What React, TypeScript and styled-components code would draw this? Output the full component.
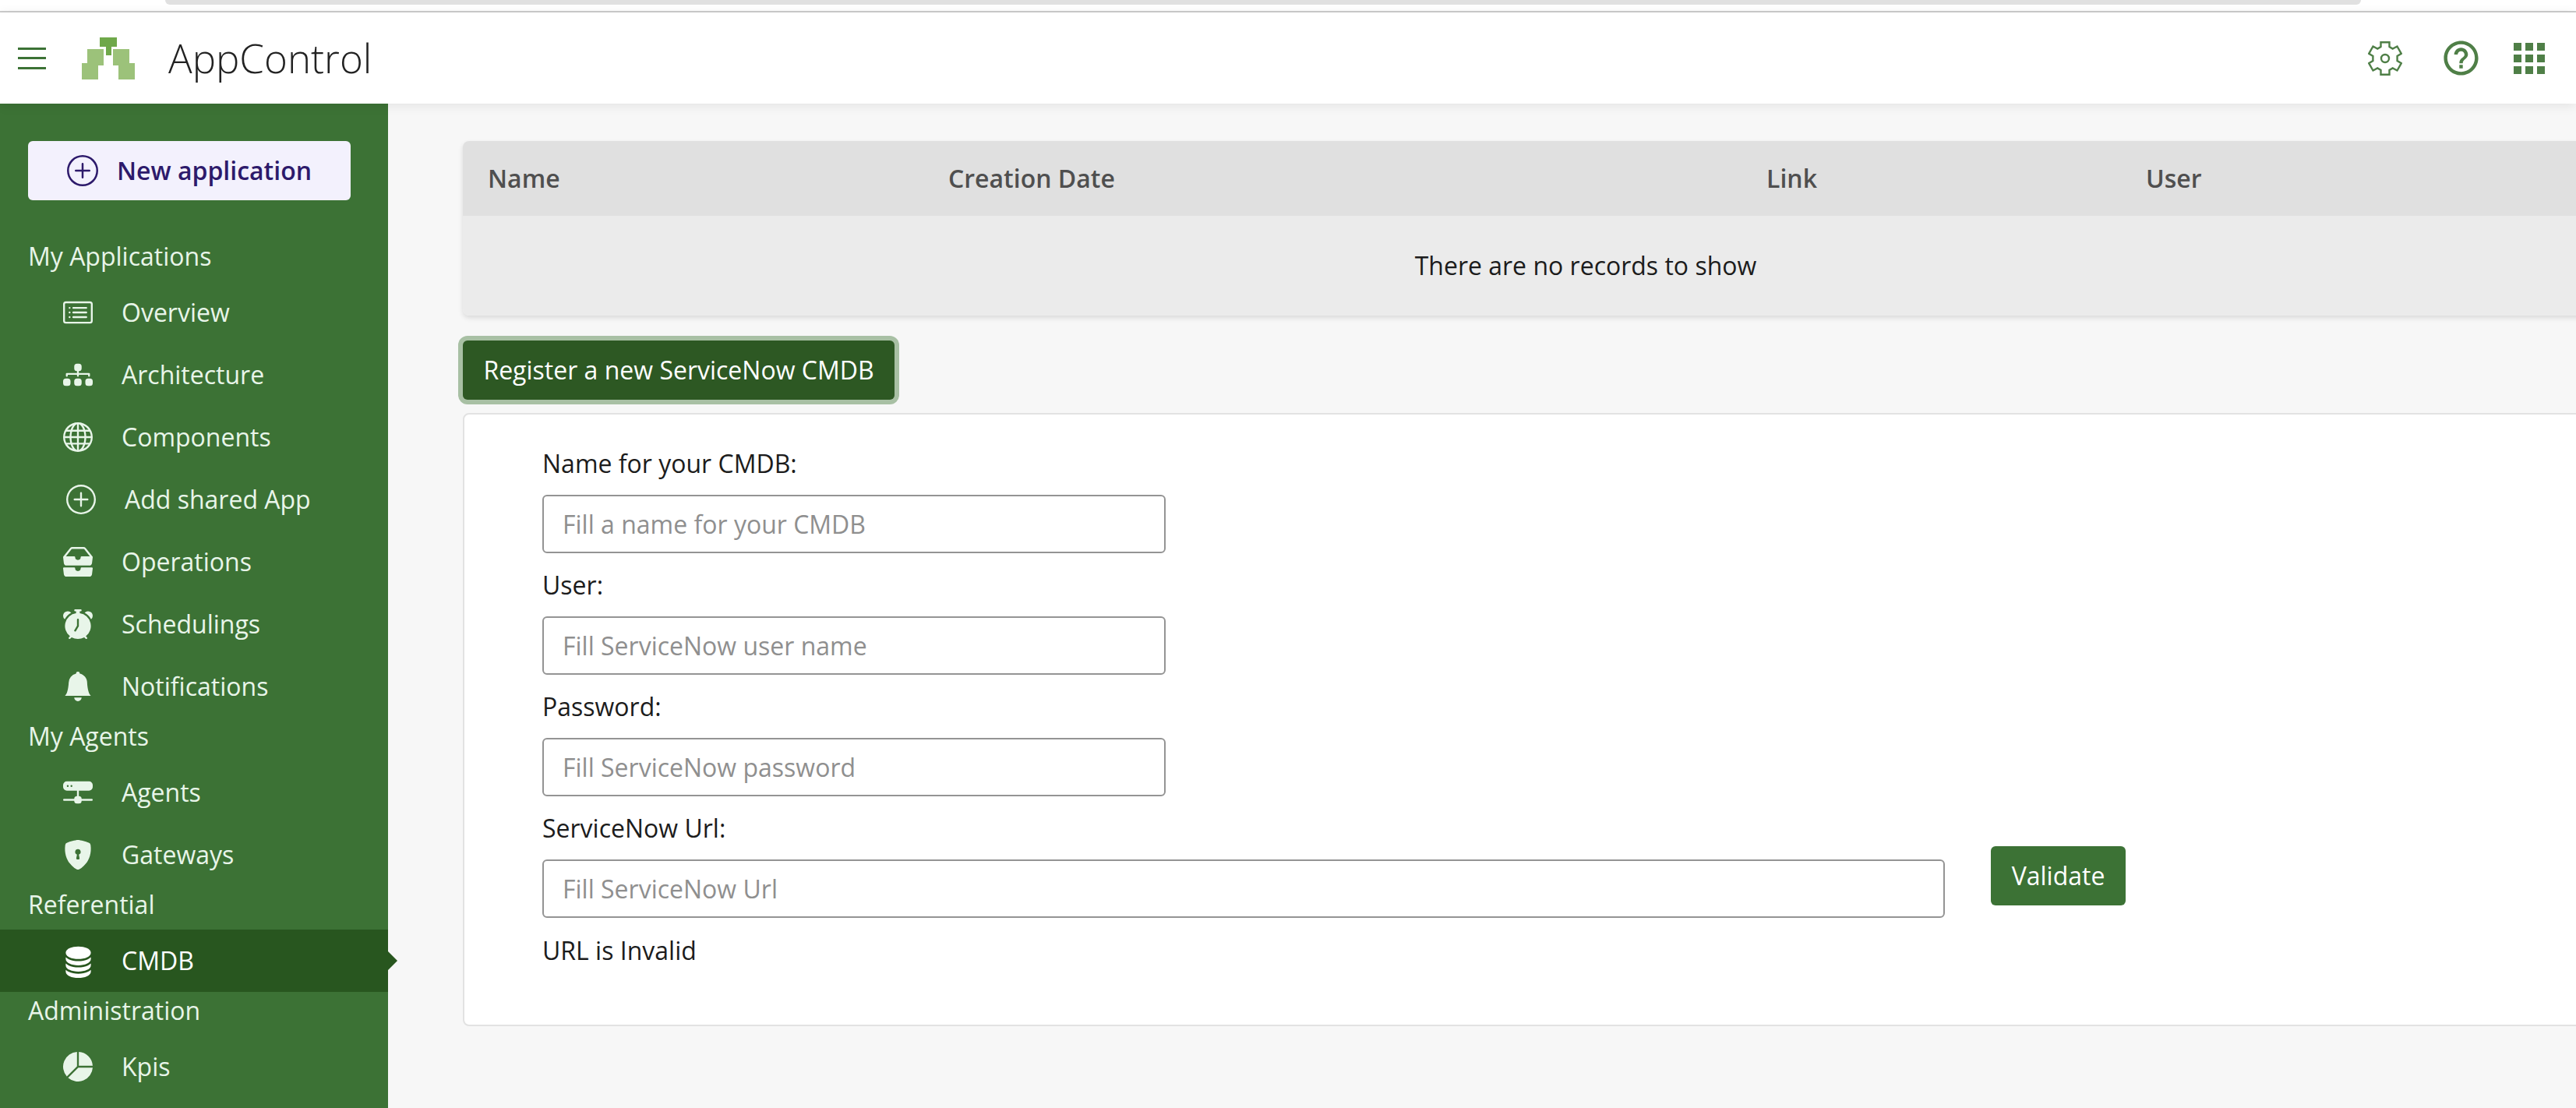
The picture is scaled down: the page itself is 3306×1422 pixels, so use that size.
import React, { ComponentType, FC } from 'react'
import styled, { createGlobalStyle } from 'styled-components'
import {
  BsAlarmFill,
  BsBellFill,
  BsCardList,
  BsDatabaseFill,
  BsDiagram3Fill,
  BsGlobe,
  BsHddNetworkFill,
  BsInboxesFill,
  BsPieChartFill,
  BsPlusCircle,
  BsShieldLockFill,
} from 'react-icons/bs'
import { MdHelpOutline } from 'react-icons/md'

const GlobalStyle = createGlobalStyle`
  html, body {
    margin: 0;
    height: 100%;
    overflow: hidden;
    background: #f7f7f7;
    font-family: "Open Sans", "Liberation Sans", sans-serif;
    font-size: 32px;
    line-height: 48px;
    color: #1c1c1c;
  }
  * { box-sizing: border-box; }
`

const Page = styled.div`
  width: 3306px;
  height: 1422px;
  display: flex;
  flex-direction: column;
  overflow: hidden;
`

const BrowserStrip = styled.div`
  height: 16px;
  flex: none;
  background: #fff;
  border-bottom: 2px solid #cdcdcd;
  padding: 0 276px 0 212px;
`

const BrowserPill = styled.div`
  height: 6px;
  background: #e0e0e0;
  border-radius: 0 0 20px 20px;
`

const Header = styled.header`
  height: 117px;
  flex: none;
  display: flex;
  align-items: center;
  background: #fff;
  padding: 0 40px 0 23px;
  position: relative;
  z-index: 2;
  box-shadow: 0 2px 14px rgba(0, 0, 0, 0.09);
`

const Burger = styled.div`
  width: 36px;
  height: 28px;
  display: flex;
  flex-direction: column;
  justify-content: space-between;
  margin-right: 46px;

  span {
    height: 3px;
    background: #3c7235;
  }
`

const AppTitle = styled.div`
  font-size: 51px;
  font-weight: 300;
  color: #222;
  margin-left: 43px;
  line-height: 60px;
  margin-top: -2px;
`

const HeaderActions = styled.div`
  margin-left: auto;
  display: flex;
  align-items: center;
  color: #4f7f47;
`

const HeaderIcon = styled.div<{ $gap: number }>`
  margin-right: ${(p) => p.$gap}px;
  display: flex;
  align-items: center;
  justify-content: center;
  width: 44px;
  height: 44px;

  svg {
    flex: none;
  }
`

const Body = styled.div`
  flex: 1;
  display: flex;
  min-height: 0;
`

const Sidebar = styled.nav`
  width: 498px;
  flex: none;
  background: #3c7235;
  padding-top: 48px;
  color: #e8f5e9;
`

const NewAppButton = styled.button`
  width: 414px;
  height: 76px;
  margin: 0 0 48px 36px;
  padding: 0 0 0 50px;
  display: flex;
  align-items: center;
  gap: 24px;
  border: none;
  border-radius: 6px;
  background: #f3f1fd;
  color: #2d1a6b;
  font: 600 32px/48px "Open Sans", sans-serif;
`

const SectionLabel = styled.div`
  height: 48px;
  line-height: 48px;
  padding-left: 36px;
  margin-bottom: 8px;
`

const NavItem = styled.div<{ $active?: boolean; $shift?: boolean }>`
  position: relative;
  height: 80px;
  display: flex;
  align-items: center;
  gap: 37px;
  padding-left: ${(p) => (p.$shift ? 85 : 81)}px;
  background: ${(p) => (p.$active ? '#28561f' : 'transparent')};
  color: ${(p) => (p.$active ? '#fff' : 'inherit')};

  ${(p) =>
    p.$active &&
    `&::after {
      content: '';
      position: absolute;
      left: 100%;
      top: 50%;
      margin-top: -12px;
      border-left: 12px solid #28561f;
      border-top: 12px solid transparent;
      border-bottom: 12px solid transparent;
    }`}
`

const IconSlot = styled.span`
  flex: none;
  width: 38px;
  height: 38px;
  display: flex;
  align-items: center;
  justify-content: center;

  svg {
    flex: none;
  }
`

const Main = styled.main`
  flex: 1;
  min-width: 0;
  padding: 48px 0 0 96px;
  background: #f7f7f7;
`

const Table = styled.div`
  width: 2882px;
  border-radius: 8px;
  overflow: hidden;
  box-shadow: 0 3px 6px rgba(0, 0, 0, 0.12);
`

const TableHead = styled.div`
  height: 96px;
  display: grid;
  grid-template-columns: 591px 1050px 487px 1fr;
  align-items: center;
  background: #e0e0e0;
  color: #4f4f4f;
  font-weight: 600;
`

const HeadCell = styled.div`
  padding-left: 32px;
`

const EmptyRow = styled.div`
  height: 128px;
  display: flex;
  align-items: center;
  justify-content: center;
  background: #ebebeb;
  color: #1c1c1c;
`

const RegisterButton = styled.button`
  display: block;
  width: 554px;
  height: 76px;
  margin: 32px 0 17px;
  padding: 0;
  border: none;
  border-radius: 6px;
  background: #2d5823;
  color: #fff;
  font: 400 32px/48px "Open Sans", sans-serif;
  box-shadow: 0 0 0 6px #a8c0a4;
`

const FormCard = styled.section`
  width: 2882px;
  height: 787px;
  padding: 39px 100px 0;
  background: #fff;
  border: 2px solid #e2e2e2;
  border-radius: 8px;
`

const Label = styled.label`
  display: block;
  height: 48px;
  margin-bottom: 16px;
`

const TextInput = styled.input<{ $wide?: boolean }>`
  display: block;
  width: ${(p) => (p.$wide ? 1800 : 800)}px;
  height: 75px;
  padding: 0 24px;
  border: 2px solid #949494;
  border-radius: 6px;
  background: #fff;
  font: 400 32px/48px "Open Sans", sans-serif;
  color: #1c1c1c;

  &::placeholder {
    color: #8f8f8f;
    opacity: 1;
  }
`

const Field = styled.div`
  margin-bottom: 17px;
`

const UrlRow = styled.div`
  display: flex;
  align-items: flex-start;
  gap: 59px;
`

const ValidateButton = styled.button`
  width: 173px;
  height: 76px;
  margin-top: -17px;
  padding: 0;
  border: none;
  border-radius: 6px;
  background: #3c7235;
  color: #fff;
  font: 400 32px/48px "Open Sans", sans-serif;
`

const ErrorText = styled.div`
  margin-top: 18px;
`

const Logo: FC = () => (
  <svg width="68" height="54" viewBox="0 0 68 54" style={{ flex: 'none' }}>
    <path d="M7 15h21v21h-7v-2H7z" fill="#9cc27a" />
    <path d="M40 15h21v19h-14v2h-7z" fill="#9cc27a" />
    <path d="M23 0h22v12h-7v11h-7V12h-8z" fill="#6fa84a" />
    <path d="M0 33h21v21H0z" fill="#9cc27a" />
    <path d="M47 33h21v21H47z" fill="#9cc27a" />
  </svg>
)

const GearIcon: FC = () => (
  <svg width="44" height="44" viewBox="0 0 44 44" fill="none" stroke="currentColor" strokeWidth="2.4">
    <path d="M16.5 1.2H27.5V7L31.7 9.6L37.5 6.5L42.8 15.8L37.6 19V25L42.8 28.2L37.5 37.5L31.7 34.4L27.5 37V42.8H16.5V37L12.3 34.4L6.5 37.5L1.2 28.2L6.4 25V19L1.2 15.8L6.5 6.5L12.3 9.6L16.5 7Z" />
    <circle cx="22" cy="22" r="5" />
  </svg>
)

const GridIcon: FC = () => {
  const cells = [0, 15, 30]
  return (
    <svg width="40" height="40" viewBox="0 0 40 40" fill="currentColor">
      {cells.map((y) => cells.map((x) => <rect key={`${x}-${y}`} x={x} y={y} width="10" height="10" />))}
    </svg>
  )
}

type NavEntry = {
  label: string
  icon: ComponentType<{ size?: number }>
  iconSize?: number
  active?: boolean
  shift?: boolean
}
type NavSection = { title: string; items: NavEntry[] }

const sections: NavSection[] = [
  {
    title: 'My Applications',
    items: [
      { label: 'Overview', icon: BsCardList },
      { label: 'Architecture', icon: BsDiagram3Fill },
      { label: 'Components', icon: BsGlobe },
      { label: 'Add shared App', icon: BsPlusCircle, shift: true },
      { label: 'Operations', icon: BsInboxesFill },
      { label: 'Schedulings', icon: BsAlarmFill },
      { label: 'Notifications', icon: BsBellFill },
    ],
  },
  {
    title: 'My Agents',
    items: [
      { label: 'Agents', icon: BsHddNetworkFill },
      { label: 'Gateways', icon: BsShieldLockFill },
    ],
  },
  {
    title: 'Referential',
    items: [{ label: 'CMDB', icon: BsDatabaseFill, iconSize: 43, active: true }],
  },
  {
    title: 'Administration',
    items: [{ label: 'Kpis', icon: BsPieChartFill }],
  },
]

const fields = [
  { label: 'Name for your CMDB:', placeholder: 'Fill a name for your CMDB' },
  { label: 'User:', placeholder: 'Fill ServiceNow user name' },
  { label: 'Password:', placeholder: 'Fill ServiceNow password' },
]

const App: FC = () => (
  <Page>
    <GlobalStyle />
    <BrowserStrip>
      <BrowserPill />
    </BrowserStrip>
    <Header>
      <Burger>
        <span />
        <span />
        <span />
      </Burger>
      <Logo />
      <AppTitle>AppControl</AppTitle>
      <HeaderActions>
        <HeaderIcon $gap={53}>
          <GearIcon />
        </HeaderIcon>
        <HeaderIcon $gap={46}>
          <MdHelpOutline size={53} />
        </HeaderIcon>
        <GridIcon />
      </HeaderActions>
    </Header>
    <Body>
      <Sidebar>
        <NewAppButton>
          <BsPlusCircle size={40} />
          New application
        </NewAppButton>
        {sections.map((section) => (
          <div key={section.title}>
            <SectionLabel>{section.title}</SectionLabel>
            {section.items.map((item) => (
              <NavItem key={item.label} $active={item.active} $shift={item.shift}>
                <IconSlot>
                  <item.icon size={item.iconSize ?? 38} />
                </IconSlot>
                {item.label}
              </NavItem>
            ))}
          </div>
        ))}
      </Sidebar>
      <Main>
        <Table>
          <TableHead>
            <HeadCell>Name</HeadCell>
            <HeadCell>Creation Date</HeadCell>
            <HeadCell>Link</HeadCell>
            <HeadCell>User</HeadCell>
          </TableHead>
          <EmptyRow>There are no records to show</EmptyRow>
        </Table>
        <RegisterButton>Register a new ServiceNow CMDB</RegisterButton>
        <FormCard>
          {fields.map((field) => (
            <Field key={field.label}>
              <Label>{field.label}</Label>
              <TextInput placeholder={field.placeholder} />
            </Field>
          ))}
          <Label>ServiceNow Url:</Label>
          <UrlRow>
            <TextInput $wide placeholder="Fill ServiceNow Url" />
            <ValidateButton>Validate</ValidateButton>
          </UrlRow>
          <ErrorText>URL is Invalid</ErrorText>
        </FormCard>
      </Main>
    </Body>
  </Page>
)

export default App
